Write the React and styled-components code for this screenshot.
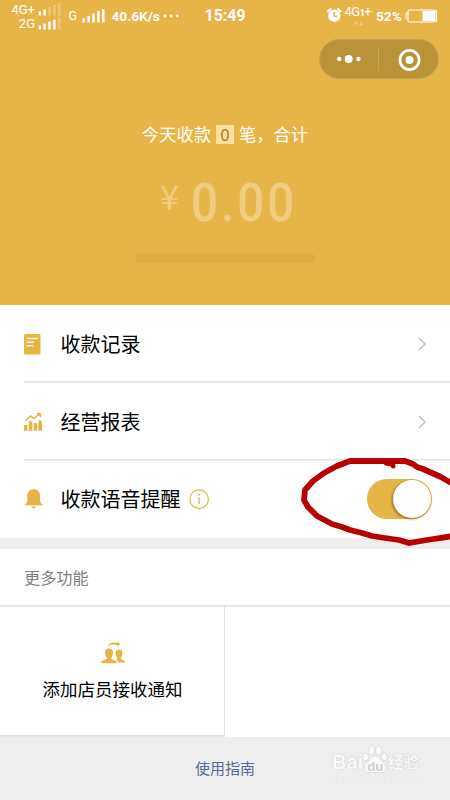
import React from 'react';
import styled, { createGlobalStyle } from 'styled-components';

const gold = '#e7b547';

const GlobalStyle = createGlobalStyle`
  * { box-sizing: border-box; }
  body { margin: 0; background: #fff; }
`;

const Screen = styled.main`
  position: relative;
  width: 450px;
  height: 800px;
  overflow: hidden;
  background: #fff;
  color: #000;
  font-family: "Noto Sans CJK SC", sans-serif;
`;

const Header = styled.header`
  height: 305px;
  background: ${gold};
  color: #fff;
  display: flex;
  flex-direction: column;
  align-items: center;
`;

const StatusBar = styled.div`
  width: 100%;
  height: 31px;
  flex: none;
  display: flex;
  align-items: center;
  font-family: Roboto, sans-serif;
  white-space: nowrap;
`;

const Networks = styled.div`
  width: 53px;
  margin-left: 9px;
  display: grid;
  grid-template-rows: 13px 13px;
  row-gap: 1px;
`;

const Network = styled.div`
  display: grid;
  grid-template-columns: 26px 24px;
  column-gap: 3px;
  align-items: center;
  font-size: 13px;
  line-height: 13px;
  text-align: right;
`;

const StatusText = styled.span`
  width: ${(p) => p.$width}px;
  margin-left: ${(p) => p.$gap || 0}px;
  font-size: ${(p) => p.$size}px;
  font-weight: ${(p) => p.$weight || 700};
  line-height: 18px;
`;

const Drawing = styled.svg`
  display: block;
  flex: none;
  margin-left: ${(p) => p.$gap || 0}px;
`;

const Mobile = styled.div`
  width: 29px;
  height: 22px;
  margin-left: 3px;
  margin-bottom: 1px;
`;

const MobileText = styled.div`
  display: flex;
  align-items: baseline;
  font-size: 13px;
  line-height: 16px;
  letter-spacing: -0.5px;
`;

const TinyOne = styled.span`
  font-size: 9px;
  font-weight: 700;
`;

const Capsule = styled.div`
  width: 120px;
  height: 40px;
  margin: 8px 11px 0 0;
  align-self: flex-end;
  flex: none;
  display: grid;
  grid-template-columns: 58px 1px 59px;
  align-items: center;
  justify-items: center;
  border: 1px solid #c9a35a;
  border-radius: 20px;
  background: #ba9338;
`;

const CapsuleDivider = styled.span`
  width: 1px;
  height: 24px;
  background: #cba656;
`;

const Summary = styled.div`
  height: 26px;
  margin-top: 42px;
  display: flex;
  align-items: center;
  font-size: 17.3px;
  line-height: 26px;
`;

const Count = styled.span`
  width: 18px;
  height: 19px;
  margin: 1px 5px 0;
  background: #ffe09a;
  color: #a77d25;
  font-size: 17px;
  line-height: 18px;
  text-align: center;
`;

const Total = styled.div`
  height: 56px;
  margin-top: 27px;
  width: 136px;
  display: flex;
  color: #f0cc7f;
  font-family: Roboto, sans-serif;
`;

const Currency = styled.span`
  width: 34px;
  flex: none;
  padding-left: 3px;
  font-family: "Noto Sans CJK SC", sans-serif;
  font-size: 34px;
  line-height: 44px;
`;

const Digits = styled.span`
  font-size: 54px;
  font-weight: 500;
  line-height: 57px;
  letter-spacing: 3.4px;
  transform: scaleX(0.88);
  transform-origin: left;
`;

const Slot = styled.div`
  width: 180px;
  height: 10px;
  margin-top: 23px;
  border-radius: 5px;
  background: #dfae43;
`;

const Menu = styled.section`
  height: 233px;
  padding-left: 24px;
  display: grid;
  grid-template-rows: 77px 78px 78px;
`;

const MenuRow = styled.div`
  display: flex;
  align-items: center;
  padding-top: ${(p) => (p.$last ? 0 : 2)}px;
  padding-right: ${(p) => p.$end}px;
  border-bottom: ${(p) => (p.$last ? '0' : '1px solid #e2e2e2')};
  box-shadow: ${(p) => (p.$last ? 'none' : '0 1px 0 #f0f0f0')};
`;

const IconBox = styled.span`
  width: 36.5px;
  flex: none;
`;

const Label = styled.span`
  font-size: 20px;
  line-height: 30px;
  flex: ${(p) => (p.$fit ? 'none' : '1')};
`;

const Toggle = styled.span`
  width: 65px;
  height: 40px;
  margin-left: auto;
  margin-bottom: 1px;
  padding: 1px;
  display: flex;
  justify-content: flex-end;
  border-radius: 20px;
  background: ${gold};
`;

const Knob = styled.span`
  width: 38px;
  height: 38px;
  border-radius: 50%;
  background: #fff;
  box-shadow: -1px 1px 3px rgba(70, 45, 0, 0.6);
`;

const Gap = styled.div`
  height: 11px;
  background: #ededed;
`;

const SectionTitle = styled.h2`
  height: 57px;
  margin: 0;
  padding: 0 24px;
  border-bottom: 1px solid #e2e2e2;
  box-shadow: 0 1px 0 #f0f0f0;
  color: #808080;
  font-size: 16.2px;
  font-weight: 400;
  line-height: 57px;
`;

const Functions = styled.section`
  height: 131px;
  display: grid;
  grid-template-columns: 225px 225px;
`;

const FunctionCell = styled.div`
  height: 130px;
  padding: 35px 0 0 1px;
  display: flex;
  flex-direction: column;
  align-items: center;
  border-right: 1px solid #dfdfdf;
  border-bottom: 1px solid #e2e2e2;
  box-shadow: 0 1px 0 #e8e8e8;
  font-size: 17.5px;
`;

const FunctionLabel = styled.span`
  margin-top: 11px;
  line-height: 26px;
`;

const Footer = styled.footer`
  height: 63px;
  display: grid;
  grid-template-columns: 1fr auto 1fr;
  background: #eee;
`;

const Guide = styled.span`
  grid-column: 2;
  color: #576b95;
  font-size: 15px;
  line-height: 62px;
`;

const Watermark = styled.div`
  width: 96px;
  margin: 6px 0 0 77px;
  color: #fafafa;
  font-family: "Liberation Sans", sans-serif;
  text-shadow: 0 0 1px #c4c4c4, 0 0 1px #d0d0d0;
`;

const WatermarkBrand = styled.div`
  height: 31px;
  display: flex;
  align-items: flex-end;
`;

const BrandText = styled.span`
  width: ${(p) => p.$width}px;
  font-size: ${(p) => p.$size}px;
  font-weight: 700;
  line-height: 23px;
  white-space: nowrap;
  font-family: "Liberation Sans", "Noto Sans CJK SC", sans-serif;
`;

const WatermarkUrl = styled.div`
  font-size: 11px;
  line-height: 13px;
  white-space: nowrap;
  color: #f8f8f8;
  text-shadow: 0 0 1px #d2d2d2;
`;

const HandStroke = styled.svg`
  position: absolute;
  left: 290px;
  top: 440px;
  pointer-events: none;
`;

function Bars({ heights, lit = 5, gap, width = 24 }) {
  return (
    <Drawing width={width} height="14" viewBox={`0 0 ${width} 14`} $gap={gap}>
      {heights.map((h, i) => (
        <rect key={i} x={i * 4.9 + 0.5} y={13.5 - h} width="2.4" height={h} fill={i < lit ? '#fff' : '#edc777'} />
      ))}
    </Drawing>
  );
}

function Arrow() {
  return (
    <Drawing width="9" height="14" viewBox="0 0 9 14">
      <path d="M1 1L7 7L1 13" fill="none" stroke="#c4c4c4" strokeWidth="1.6" />
    </Drawing>
  );
}

function RecordIcon() {
  return (
    <Drawing width="17" height="22" viewBox="0 0 17 22">
      <rect y="1" width="16.5" height="20.5" rx="1.5" fill={gold} />
      <path d="M2.5 5.5H14M2.5 9.2H10M2.5 12.8H9" stroke="#fff4d7" strokeWidth="1.4" />
    </Drawing>
  );
}

function ReportIcon() {
  return (
    <Drawing width="19" height="20" viewBox="0 0 19 20">
      <path d="M0 13H3.5V18.7H0ZM4.8 9.2H8.4V18.7H4.8ZM9.7 11H13.2V18.7H9.7ZM14.4 8.5H18V18.7H14.4Z" fill={gold} />
      <path d="M1 9L6.7 4L10 6.5L15.2 2" fill="none" stroke={gold} strokeWidth="1.6" />
      <path d="M12.2 1H17.2V5.8Z" fill={gold} />
    </Drawing>
  );
}

function BellIcon() {
  return (
    <Drawing width="20" height="21" viewBox="0 0 20 21">
      <path d="M0 16.2C2.7 14.7 3.3 13.6 3.3 11V7.2C3.3 3 6 .3 9.7 .3S16.1 3 16.1 7.2V11C16.1 13.6 16.8 14.7 19.5 16.2Z" fill={gold} />
      <path d="M7.5 17.6H12C11.5 19 10.8 19.4 9.7 19.4S8 19 7.5 17.6Z" fill={gold} />
    </Drawing>
  );
}

function InfoIcon() {
  return (
    <Drawing width="21" height="21" viewBox="0 0 21 21" $gap="8">
      <circle cx="10.1" cy="10.2" r="9.3" fill="none" stroke={gold} strokeWidth="1.3" />
      <circle cx="10.1" cy="5.8" r="1" fill={gold} />
      <path d="M10.1 8.2V15" stroke={gold} strokeWidth="1.4" />
    </Drawing>
  );
}

function StaffIcon() {
  return (
    <Drawing width="25" height="24" viewBox="0 0 25 24" $gap="1">
      <path d="M6 5.2C8.5 1.2 13.5 .8 16.8 2V.2L19 3.3L16.5 6L16.6 4.2C13 3 9.2 3.2 6 5.2Z" fill={gold} />
      <path d="M4 11.5C4 8.8 5.5 7.4 8 7.4S12 8.8 12 11.5C12 13.8 11.3 15.6 10.2 16.6V18L15 20C15.7 20.4 15.8 21 15.8 22.2H.3C.3 20.8 .5 20.2 1.3 19.8L5.8 18V16.6C4.7 15.5 4 13.8 4 11.5Z" fill={gold} />
      <path d="M14.6 12C14.6 9.8 15.8 8.5 18 8.5S21.3 9.8 21.3 12C21.3 14 20.8 15.8 19.8 16.8V18L23 19.5C24.2 20.2 24.4 20.7 24.4 21.6H17C17 20 16.7 19.4 15.3 18.8L16.3 18V16.8C15.2 15.7 14.6 14 14.6 12Z" fill={gold} />
    </Drawing>
  );
}

function AlarmIcon() {
  return (
    <Drawing width="15" height="15" viewBox="0 0 15 15" $gap="81">
      <circle cx="7.3" cy="7.7" r="6.2" fill="#fff" />
      <path d="M.8 3.5L3.6 1M11 1L13.8 3.5" stroke="#fff" strokeWidth="1.8" strokeLinecap="round" />
      <path d="M7.2 4V8.2H10.3" fill="none" stroke={gold} strokeWidth="1.5" />
    </Drawing>
  );
}

function Paw() {
  return (
    <Drawing width="26" height="29" viewBox="0 0 26 29">
      <g fill="#fafafa" stroke="#d4d4d4" strokeWidth=".7">
        <ellipse cx="3.6" cy="12" rx="2.9" ry="3.9" />
        <ellipse cx="9.6" cy="5.2" rx="3" ry="4.4" />
        <ellipse cx="16.6" cy="5.2" rx="3" ry="4.4" />
        <ellipse cx="22.4" cy="11.8" rx="2.9" ry="3.9" />
        <path d="M13 11C8.5 11 8.5 15 5 17.5C0 21 2 28 7 27.8C10 27.4 16 27.4 19 27.8C24 28 26 21.5 21.5 18C18 15 17.5 11 13 11Z" />
      </g>
      <text x="5.2" y="25.5" fontFamily="Liberation Sans" fontSize="13" fontWeight="700" fill="#d0d0d0" style={{ textShadow: 'none' }}>du</text>
    </Drawing>
  );
}

export default function App() {
  return (
    <Screen>
      <GlobalStyle />
      <Header>
        <StatusBar>
          <Networks>
            <Network>4G+<Bars heights={[4, 6, 8.5, 10.5, 12.5]} lit={2} /></Network>
            <Network>2G<Bars heights={[4, 6, 8, 10, 12]} lit={4} /></Network>
          </Networks>
          <StatusText $width={9} $gap={6.5} $size={12.5} $weight={400}>G</StatusText>
          <Bars heights={[4.5, 6.5, 9, 11.5, 13.5]} gap={4} />
          <StatusText $width={49} $gap={6} $size={13.7}>40.6K/s</StatusText>
          <Drawing width="17" height="4" viewBox="0 0 17 4" $gap="2.5">
            <path d="M2 2H2.01M8.2 2H8.21M14.4 2H14.41" stroke="#fff" strokeWidth="2.8" strokeLinecap="round" />
          </Drawing>
          <StatusText $width={41} $gap={24.5} $size={16}>15:49</StatusText>
          <AlarmIcon />
          <Mobile>
            <MobileText>4G<TinyOne>1</TinyOne>+</MobileText>
            <Drawing width="10" height="5" viewBox="0 0 10 5" $gap="9">
              <path d="M0 1H4L2 4.5ZM5 4.5H9L7 1Z" fill="#efcb83" />
            </Drawing>
          </Mobile>
          <StatusText $width={27} $gap={2.5} $size={13.7}>52%</StatusText>
          <Drawing width="33" height="14" viewBox="0 0 33 14" $gap="2">
            <path d="M2 4H1V10H2" fill="none" stroke="#fff" />
            <rect x="3" y="1" width="28.5" height="12" rx="1.5" fill="none" stroke="#fff" strokeWidth="1.2" />
            <rect x="17.5" y="2" width="13" height="10" fill="#fff" />
          </Drawing>
        </StatusBar>
        <Capsule>
          <Drawing width="24" height="8" viewBox="0 0 24 8">
            <g fill="#fff"><circle cx="2.2" cy="4" r="2.2" /><circle cx="11.7" cy="4" r="4" /><circle cx="21.4" cy="4" r="2.2" /></g>
          </Drawing>
          <CapsuleDivider />
          <Drawing width="23" height="23" viewBox="0 0 23 23" $gap="2">
            <circle cx="11.5" cy="12" r="9.6" fill="none" stroke="#fff" strokeWidth="2.7" />
            <circle cx="11.5" cy="12" r="4" fill="#fff" />
          </Drawing>
        </Capsule>
        <Summary>今天收款<Count>0</Count>笔，合计</Summary>
        <Total><Currency>¥</Currency><Digits>0.00</Digits></Total>
        <Slot />
      </Header>
      <Menu>
        <MenuRow $end={23}><IconBox><RecordIcon /></IconBox><Label>收款记录</Label><Arrow /></MenuRow>
        <MenuRow $end={23}><IconBox><ReportIcon /></IconBox><Label>经营报表</Label><Arrow /></MenuRow>
        <MenuRow $end={18} $last>
          <IconBox><BellIcon /></IconBox><Label $fit>收款语音提醒</Label><InfoIcon />
          <Toggle><Knob /></Toggle>
        </MenuRow>
      </Menu>
      <Gap />
      <SectionTitle>更多功能</SectionTitle>
      <Functions>
        <FunctionCell><StaffIcon /><FunctionLabel>添加店员接收通知</FunctionLabel></FunctionCell>
      </Functions>
      <Footer>
        <Guide>使用指南</Guide>
        <Watermark>
          <WatermarkBrand>
            <BrandText $width={30} $size={20}>Bai</BrandText>
            <Paw />
            <BrandText $width={32} $size={15.5}>经验</BrandText>
          </WatermarkBrand>
          <WatermarkUrl>jingyan.baidu.com</WatermarkUrl>
        </Watermark>
      </Footer>
      <HandStroke width="160" height="120" viewBox="0 0 160 120">
        <path d="M163 44L151 37L142 33L133 29L127 27L123 24L115 21L104 21L60 21L47 26L34 33L23 41L15 50L14 60L18 67L27 76L42 84L52 87L60 90L72 93L82 96L95 98L109 100L119 103L137 100L163 96" fill="none" stroke="#b90000" strokeWidth="5.8" strokeLinejoin="round" />
        <path d="M96 23L102 24L103 26" fill="none" stroke="#b90000" strokeWidth="5" strokeLinecap="round" />
      </HandStroke>
    </Screen>
  );
}
